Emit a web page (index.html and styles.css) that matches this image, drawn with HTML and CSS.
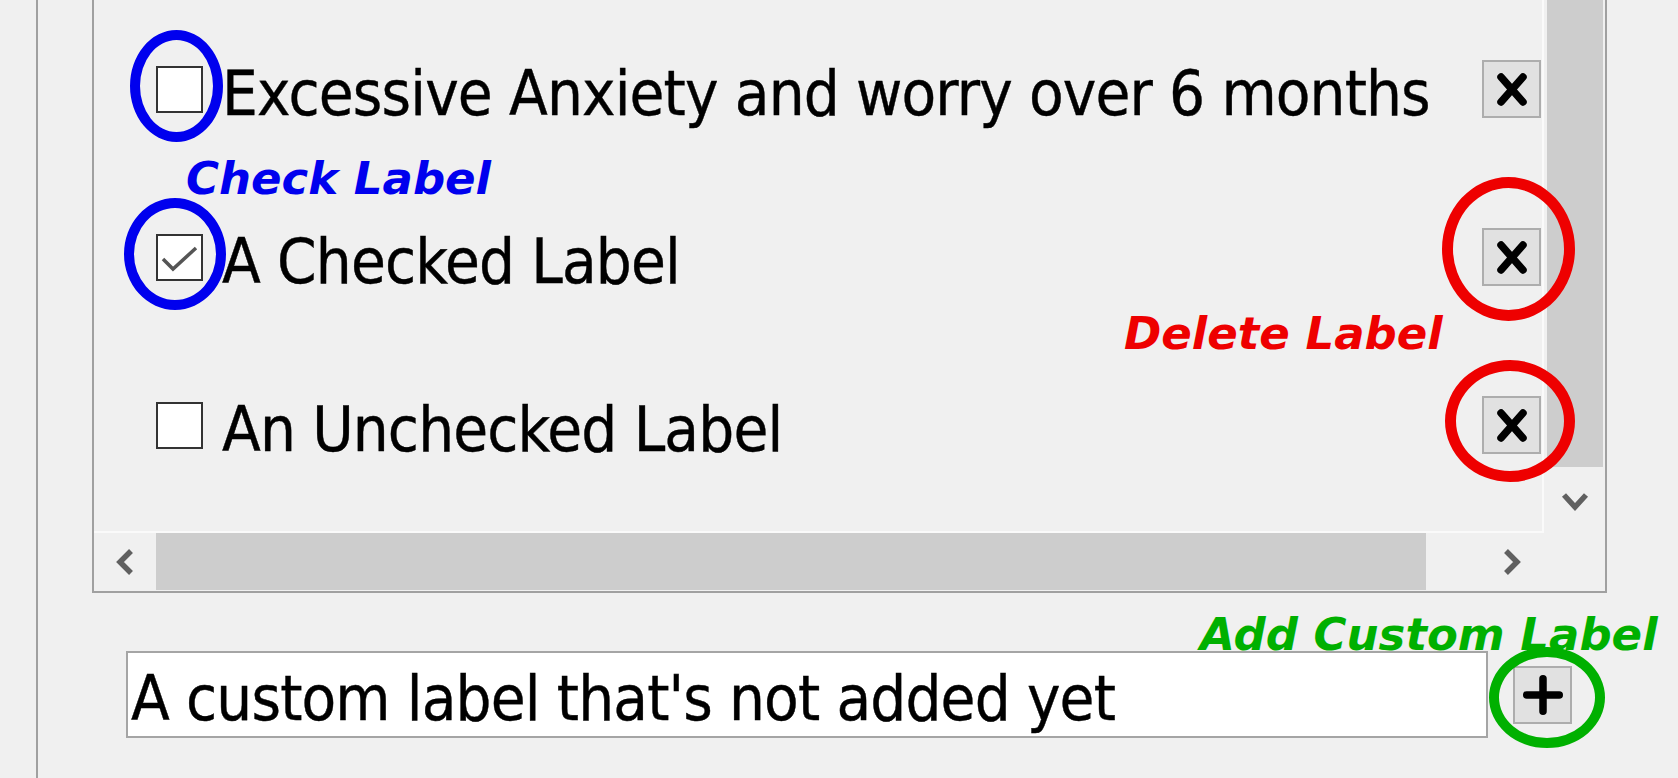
FILE: index.html
```html
<!DOCTYPE html>
<html lang="en">
<head>
<meta charset="utf-8">
<title>Labels</title>
<link rel="stylesheet" href="styles.css">
</head>
<body>
<div class="window">
  <div class="group">
    <div class="scrollarea">
      <div class="viewport">
        <div class="row">
          <span class="check"></span>
          <span class="label">Excessive Anxiety and worry over 6 months</span>
          <button class="del" type="button"><svg width="32" height="35" viewBox="0 0 32 35"><path d="M5 5 L27 30 M27 5 L5 30" stroke="#000" stroke-width="7.5" stroke-linecap="round" fill="none"/></svg></button>
        </div>
        <div class="row">
          <span class="check"><svg width="43" height="43" viewBox="0 0 43 43"><polyline points="5,23 15,33 38,12" stroke="#555" stroke-width="3.5" fill="none"/></svg></span>
          <span class="label">A Checked Label</span>
          <button class="del" type="button"><svg width="32" height="35" viewBox="0 0 32 35"><path d="M5 5 L27 30 M27 5 L5 30" stroke="#000" stroke-width="7.5" stroke-linecap="round" fill="none"/></svg></button>
        </div>
        <div class="row">
          <span class="check"></span>
          <span class="label">An Unchecked Label</span>
          <button class="del" type="button"><svg width="32" height="35" viewBox="0 0 32 35"><path d="M5 5 L27 30 M27 5 L5 30" stroke="#000" stroke-width="7.5" stroke-linecap="round" fill="none"/></svg></button>
        </div>
      </div>
      <div class="vscroll">
        <div class="vthumb"></div>
        <div class="vbtn"><svg width="28" height="22" viewBox="0 0 28 22"><polyline points="3,4 14,16 25,4" stroke="#606060" stroke-width="5.5" fill="none"/></svg></div>
      </div>
      <div class="hscroll">
        <div class="hbtn"><svg width="22" height="28" viewBox="0 0 22 28"><polyline points="17,3 6,14 17,25" stroke="#606060" stroke-width="5.5" fill="none"/></svg></div>
        <div class="htrack"><div class="hthumb"></div></div>
        <div class="hbtn hbtn-right"><svg width="22" height="28" viewBox="0 0 22 28"><polyline points="5,3 16,14 5,25" stroke="#606060" stroke-width="5.5" fill="none"/></svg></div>
      </div>
      <div class="corner"></div>
    </div>
    <div class="addrow">
      <div class="input">A custom label that's not added yet</div>
      <button class="add" type="button"><svg width="42" height="42" viewBox="0 0 42 42"><path d="M4.75 21 H37.25 M21 4.75 V37.25" stroke="#000" stroke-width="7.5" stroke-linecap="round" fill="none"/></svg></button>
    </div>
  </div>

  <div class="notes">
    <div class="ring ring-blue ring-b1"></div>
    <div class="ring ring-blue ring-b2"></div>
    <div class="note note-blue note-check">Check Label</div>
    <div class="ring ring-red ring-r1"></div>
    <div class="ring ring-red ring-r2"></div>
    <div class="note note-red note-delete">Delete Label</div>
    <div class="note note-green note-add">Add Custom Label</div>
    <div class="ring ring-green ring-g1"></div>
  </div>
</div>
</body>
</html>
```

FILE: styles.css
```css
html, body {
  margin: 0;
  padding: 0;
}

body {
  background: #f0f0f0;
  font-family: "DejaVu Sans Condensed", "DejaVu Sans", sans-serif;
  font-stretch: condensed;
  color: #000;
  overflow: hidden;
}

.window {
  position: relative;
  width: 1678px;
  height: 778px;
  overflow: hidden;
}

.group {
  margin-left: 36px;
  border-left: 2px solid #a0a0a0;
  height: 778px;
  box-sizing: border-box;
  padding-left: 54px;
}

.scrollarea {
  width: 1515px;
  height: 593px;
  box-sizing: border-box;
  border: 2px solid #a0a0a0;
  border-top: 0;
  display: grid;
  grid-template-columns: 1450px 61px;
  grid-template-rows: 533px 58px;
}

.viewport {
  box-sizing: border-box;
  border-right: 2px solid #fafafa;
  border-bottom: 2px solid #fafafa;
  overflow: hidden;
  padding-top: 5px;
}

.row {
  height: 168px;
  display: flex;
  align-items: center;
  padding-left: 62px;
  padding-right: 1px;
}

.check {
  flex: none;
  width: 47px;
  height: 47px;
  box-sizing: border-box;
  border: 2px solid #333;
  background: #fff;
  display: flex;
}

.label {
  flex: 1;
  margin-left: 19px;
  font-size: 63px;
  letter-spacing: -0.85px;
  padding-top: 8px;
  white-space: nowrap;
  -webkit-text-stroke: 0.4px #000;
}

.del, .add {
  flex: none;
  width: 59px;
  height: 58px;
  box-sizing: border-box;
  padding: 0;
  background: #e1e1e1;
  border: 2px solid #adadad;
  display: flex;
  align-items: center;
  justify-content: center;
}

.vscroll {
  display: flex;
  flex-direction: column;
}

.vthumb {
  flex: 1;
  background: #cdcdcd;
  margin: 0 2px 3px 3px;
}

.vbtn {
  height: 63px;
  flex: none;
  display: flex;
  align-items: center;
  justify-content: center;
}

.hscroll {
  display: flex;
}

.hbtn {
  flex: none;
  width: 62px;
  display: flex;
  align-items: center;
  justify-content: center;
}

.hbtn-right {
  width: 64px;
}

.htrack {
  flex: 1;
}

.hthumb {
  width: 1270px;
  height: 57px;
  background: #cdcdcd;
}

.corner {
  background: #f0f0f0;
}

.addrow {
  display: flex;
  align-items: center;
  gap: 25px;
  margin-top: 58px;
  padding-left: 34px;
}

.input {
  width: 1362px;
  height: 87px;
  box-sizing: border-box;
  border: 2px solid #a5a5a5;
  background: #fff;
  font-size: 63px;
  letter-spacing: -0.85px;
  padding: 8px 0 0 3px;
  display: flex;
  align-items: center;
  white-space: nowrap;
  -webkit-text-stroke: 0.4px #000;
}

/* annotation overlay */
.notes {
  position: absolute;
  inset: 0;
  pointer-events: none;
}

.ring {
  position: absolute;
  box-sizing: border-box;
  border-radius: 50%;
  border-style: solid;
}

.ring-blue { border-color: #0000ee; border-width: 10px; }
.ring-red { border-color: #ee0000; border-width: 11px; }
.ring-green { border-color: #00b000; border-width: 10px; }

.ring-b1 { left: 130px; top: 30px; width: 93px; height: 112px; }
.ring-b2 { left: 124px; top: 198px; width: 102px; height: 112px; }
.ring-r1 { left: 1442px; top: 177px; width: 133px; height: 144px; }
.ring-r2 { left: 1445px; top: 360px; width: 130px; height: 122px; }
.ring-g1 { left: 1489px; top: 647px; width: 116px; height: 101px; }

.note {
  position: absolute;
  font-family: "DejaVu Sans", sans-serif;
  font-stretch: normal;
  font-weight: bold;
  font-style: oblique;
  font-size: 45px;
  line-height: 1;
  white-space: nowrap;
}

.note-blue { color: #0000ee; }
.note-red { color: #ee0000; }
.note-green { color: #00b000; }

.note-check { left: 186px; top: 156px; }
.note-delete { left: 1124px; top: 311px; }
.note-add { left: 1200px; top: 612px; }
```
